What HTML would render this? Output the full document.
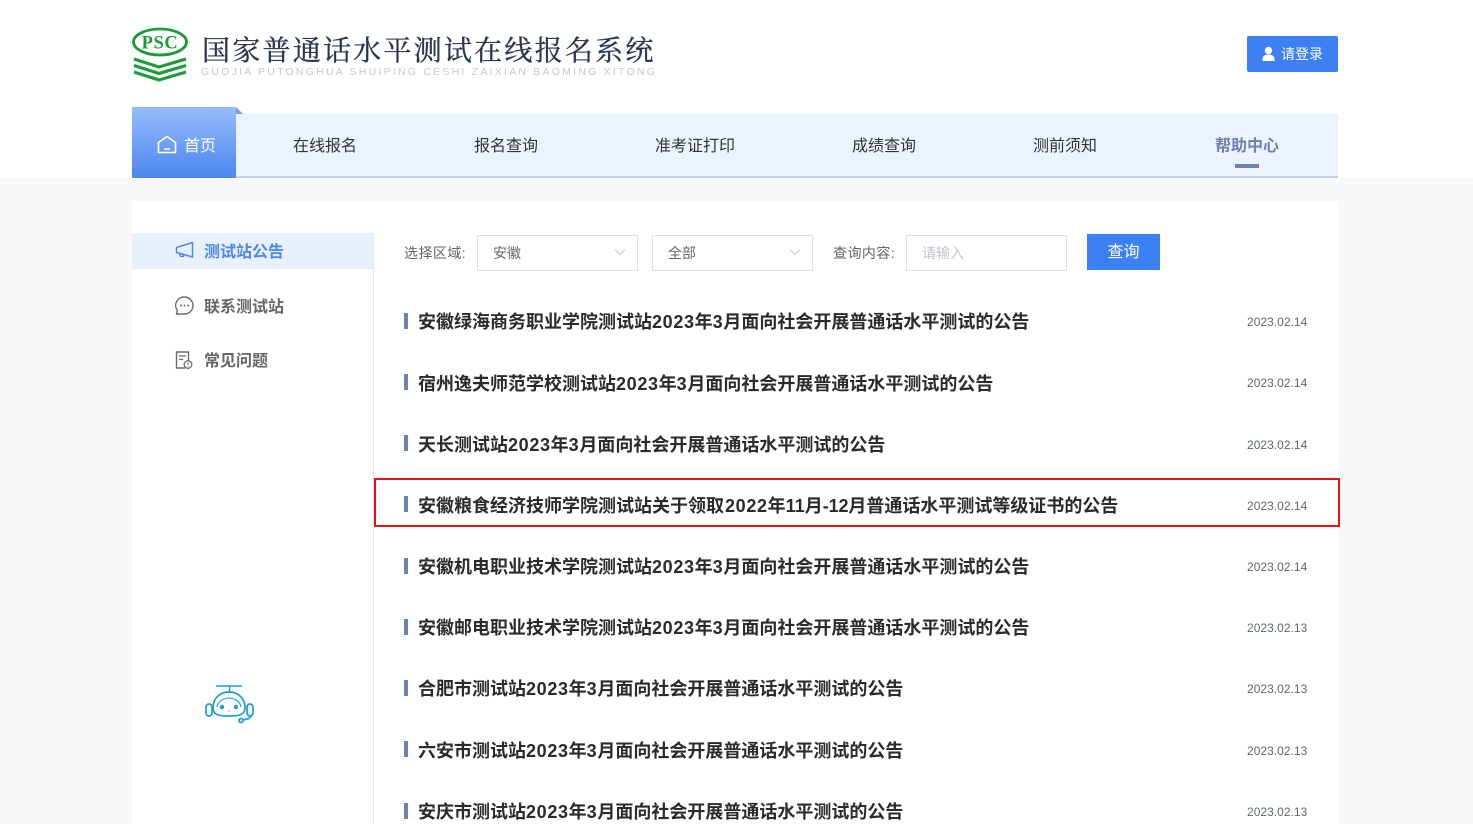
<!DOCTYPE html>
<html lang="zh"><head><meta charset="utf-8"><title>国家普通话水平测试在线报名系统</title>
<style>
*{box-sizing:border-box}
html,body{margin:0;padding:0}
body{width:1473px;height:824px;overflow:hidden;position:relative;background:#f8f8f8;font-family:"Liberation Sans","Noto Sans CJK SC",sans-serif;color:#333}
.a{position:absolute;white-space:nowrap}
.nav{top:137px;line-height:20px;font-size:16px;color:#333;height:20px}
.side{left:204px;font-size:16px;font-weight:bold;line-height:20px;color:#666}
.t{left:418px;font-size:18px;font-weight:bold;line-height:24px;color:#2b2b2b}
.t i{font-style:normal;letter-spacing:.65px}
.bar{left:404px;width:4px;height:16px;background:#6d83ab}
.d{left:1247px;font-size:12px;line-height:14px;color:#5f6672;letter-spacing:.02px}
.box{height:36px;border:1px solid #dfe1e8;background:#fff;font-size:14px;line-height:35px;color:#666;padding-left:15px}
.lb{font-size:14px;line-height:20px;color:#666;letter-spacing:.45px}
</style></head><body>
<div class="a" style="left:0;top:0;width:1473px;height:178px;background:#fff"></div>

<svg class="a" style="left:132px;top:27px" width="56" height="55" viewBox="0 0 56 55">
<ellipse cx="28" cy="15" rx="26.500" ry="13" fill="none" stroke="#1e9a3a" stroke-width="2.800"/>
<text x="28" y="21.500" font-family="Liberation Serif" font-size="18.500" font-weight="bold" fill="#1e9a3a" text-anchor="middle" letter-spacing=".6">PSC</text>
<g fill="none" stroke="#1e9a3a" stroke-width="3.200">
<path d="M2 32 27 40 54 32M2 38.500 27 46.500 54 38.500M2 45 27 53 54 45"/>
</g></svg>
<div class="a" style="left:202px;top:30px;font-family:'Noto Serif CJK SC',serif;font-size:28px;line-height:38px;letter-spacing:2.240px;color:#2b3550;-webkit-text-stroke:.35px #2b3550">国家普通话水平测试在线报名系统</div>
<div class="a" style="left:201px;top:66px;font-size:10.500px;line-height:13px;letter-spacing:2.230px;color:#c5c8ce">GUOJIA PUTONGHUA SHUIPING CESHI ZAIXIAN BAOMING XITONG</div>

<div class="a" style="left:1247px;top:36px;width:91px;height:36px;background:#3c80f2;border-radius:2px"></div>
<svg class="a" style="left:1261px;top:46px" width="15" height="16" viewBox="0 0 15 16"><circle cx="7.500" cy="4.500" r="3.700" fill="#fff"/><path d="M1.500 15v-2c0-3 2.500-4.500 6-4.500s6 1.500 6 4.500v2z" fill="#fff"/></svg>
<div class="a" style="left:1281px;top:44px;font-size:14px;line-height:20px;color:#fff">请登录</div>

<div class="a" style="left:132px;top:114px;width:1206px;height:64px;background:#ebf4fe;border-bottom:2px solid #c3d3e8"></div>
<div class="a" style="left:132px;top:107px;width:104px;height:71px;background:linear-gradient(#97bcfb,#4a87ef)"></div>
<svg class="a" style="left:236px;top:107px" width="7" height="7"><path d="M0 0 7 7H0z" fill="#7d9fd8"/></svg>
<svg class="a" style="left:157px;top:135px" width="20" height="19" viewBox="0 0 20 19"><path d="M1.500 7.500 10 1.500l8.500 6V17.500h-17z" fill="none" stroke="#fff" stroke-width="1.600" stroke-linejoin="round"/><path d="M7 14h6" stroke="#fff" stroke-width="1.500"/></svg>
<div class="a nav" style="left:184px;color:#fff">首页</div>
<div class="a nav" style="left:293px">在线报名</div>
<div class="a nav" style="left:474px">报名查询</div>
<div class="a nav" style="left:655px">准考证打印</div>
<div class="a nav" style="left:852px">成绩查询</div>
<div class="a nav" style="left:1033px">测前须知</div>
<div class="a nav" style="left:1215px;color:#6d83ab;font-weight:bold">帮助中心</div>
<div class="a" style="left:1235px;top:164px;width:24px;height:4px;background:#6d83ab"></div>

<div class="a" style="left:132px;top:201px;width:1206px;height:623px;background:#fff"></div>
<div class="a" style="left:373px;top:233px;width:1px;height:591px;background:#e8e8ea"></div>
<div class="a" style="left:132px;top:233px;width:241px;height:36px;background:#e8f0fc"></div>

<svg class="a" style="left:175px;top:241px" width="19" height="18" viewBox="0 0 19 18"><path d="M17.500 1.500V16L1.500 11.500V6.500z" fill="none" stroke="#4a88f0" stroke-width="1.500" stroke-linejoin="round"/><path d="M4.500 12.500 5.500 15.500H8.500L8 13.500" fill="none" stroke="#4a88f0" stroke-width="1.300"/></svg>
<div class="a side" style="top:243px;color:#4a88f0">测试站公告</div>
<svg class="a" style="left:175px;top:296px" width="19" height="19" viewBox="0 0 19 19"><path d="M9.500 1a8.500 8.500 0 1 1 0 17H1.500l.8-3.500A8.500 8.500 0 0 1 9.500 1z" fill="none" stroke="#6b6b6b" stroke-width="1.400"/><circle cx="6" cy="9.500" r="1" fill="#6b6b6b"/><circle cx="9.500" cy="9.500" r="1" fill="#6b6b6b"/><circle cx="13" cy="9.500" r="1" fill="#6b6b6b"/></svg>
<div class="a side" style="top:298px">联系测试站</div>
<svg class="a" style="left:175px;top:351px" width="18" height="18" viewBox="0 0 18 18"><path d="M10 17H1.500V1h12v8" fill="none" stroke="#6b6b6b" stroke-width="1.400"/><path d="M4 5h7M4 8.500h4" stroke="#6b6b6b" stroke-width="1.300"/><circle cx="13" cy="13.500" r="3.800" fill="none" stroke="#6b6b6b" stroke-width="1.300"/><path d="M13 11.500v2.500M13 15v.8" stroke="#6b6b6b" stroke-width="1"/></svg>
<div class="a side" style="top:352px">常见问题</div>

<svg class="a" style="left:204px;top:683px" width="51" height="41" viewBox="0 0 51 41" fill="none" stroke="#1a9fd0" stroke-width="1.700">
<path d="M12 3H38M25.500 3V9" stroke-width="1.500"/>
<path d="M9 25C9 15 16 9 25 9S41 15 41 25C41 32 35 33 25 33S9 32 9 25z"/>
<path d="M13 24C14 18 20 15 25 15S36 18 37 24" stroke-width="1.100"/>
<rect x="2" y="21" width="6" height="12" rx="3"/><rect x="43" y="21" width="6" height="12" rx="3"/>
<path d="M47 33C46 36 43 36 39 37"/><circle cx="37" cy="37.500" r="2"/>
<circle cx="18" cy="24" r="2.200" fill="#1a9fd0" stroke="none"/><circle cx="32" cy="24" r="2.200" fill="#1a9fd0" stroke="none"/>
<circle cx="25" cy="28" r=".7" fill="#e66" stroke="none"/>
</svg>

<div class="a lb" style="left:404px;top:243px">选择区域:</div>
<div class="a box" style="left:477px;top:235px;width:161px">安徽</div>
<svg class="a" style="left:614px;top:248px" width="12" height="9"><path d="M1 1.500 6 6.500 11 1.500" fill="none" stroke="#c8ccd4" stroke-width="1.200"/></svg>
<div class="a box" style="left:652px;top:235px;width:161px">全部</div>
<svg class="a" style="left:789px;top:248px" width="12" height="9"><path d="M1 1.500 6 6.500 11 1.500" fill="none" stroke="#c8ccd4" stroke-width="1.200"/></svg>
<div class="a lb" style="left:833px;top:243px">查询内容:</div>
<div class="a box" style="left:906px;top:235px;width:161px;color:#c0c4cc">请输入</div>
<div class="a" style="left:1087px;top:234px;width:73px;height:36px;background:#3c80f2;color:#fff;font-size:16px;line-height:38px;text-align:center">查询</div>

<div class="a bar" style="top:313px"></div><div class="a t" style="top:310px">安徽绿海商务职业学院测试站<i>2023</i>年<i>3</i>月面向社会开展普通话水平测试的公告</div><div class="a d" style="top:315px">2023.02.14</div>
<div class="a bar" style="top:374px"></div><div class="a t" style="top:372px">宿州逸夫师范学校测试站<i>2023</i>年<i>3</i>月面向社会开展普通话水平测试的公告</div><div class="a d" style="top:376px">2023.02.14</div>
<div class="a bar" style="top:435px"></div><div class="a t" style="top:433px">天长测试站<i>2023</i>年<i>3</i>月面向社会开展普通话水平测试的公告</div><div class="a d" style="top:438px">2023.02.14</div>
<div class="a" style="left:374px;top:478px;width:966px;height:49px;border:2px solid #e60f1e"></div>
<div class="a bar" style="top:496px"></div><div class="a t" style="top:494px">安徽粮食经济技师学院测试站关于领取<i style="margin-left:1px">2022</i>年<i style="letter-spacing:0">11</i>月<i style="letter-spacing:-.1px">-12</i>月普通话水平测试等级证书的公告</div><div class="a d" style="top:499px">2023.02.14</div>
<div class="a bar" style="top:558px"></div><div class="a t" style="top:555px">安徽机电职业技术学院测试站<i>2023</i>年<i>3</i>月面向社会开展普通话水平测试的公告</div><div class="a d" style="top:560px">2023.02.14</div>
<div class="a bar" style="top:619px"></div><div class="a t" style="top:616px">安徽邮电职业技术学院测试站<i>2023</i>年<i>3</i>月面向社会开展普通话水平测试的公告</div><div class="a d" style="top:621px">2023.02.13</div>
<div class="a bar" style="top:680px"></div><div class="a t" style="top:677px">合肥市测试站<i>2023</i>年<i>3</i>月面向社会开展普通话水平测试的公告</div><div class="a d" style="top:682px">2023.02.13</div>
<div class="a bar" style="top:741px"></div><div class="a t" style="top:739px">六安市测试站<i>2023</i>年<i>3</i>月面向社会开展普通话水平测试的公告</div><div class="a d" style="top:744px">2023.02.13</div>
<div class="a bar" style="top:803px"></div><div class="a t" style="top:800px">安庆市测试站<i>2023</i>年<i>3</i>月面向社会开展普通话水平测试的公告</div><div class="a d" style="top:805px">2023.02.13</div>
</body></html>
